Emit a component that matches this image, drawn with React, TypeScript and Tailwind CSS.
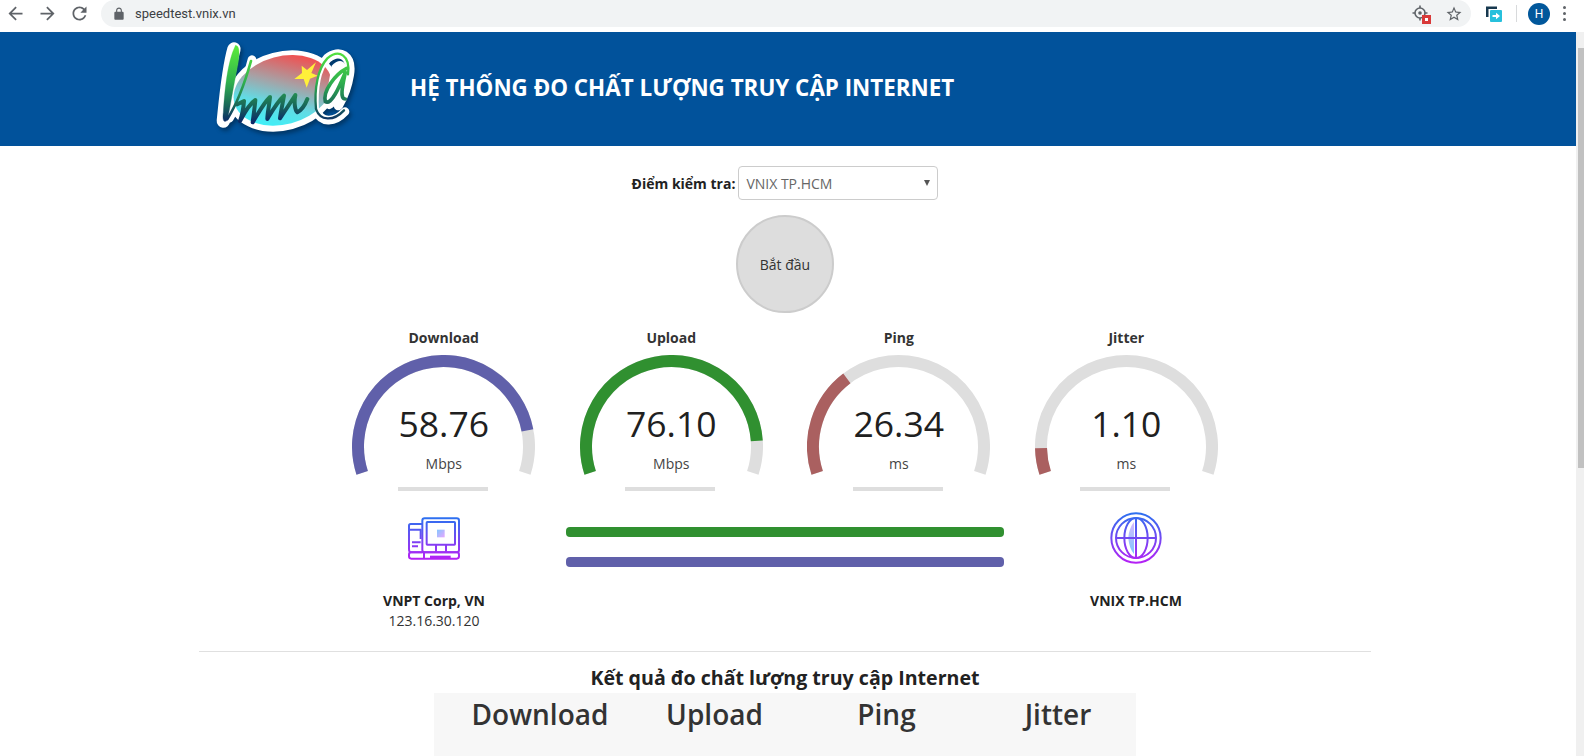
import React from "react";

function arc(cx: number, cy: number, r: number, a0: number, a1: number) {
  const x0 = cx + r * Math.cos(a0), y0 = cy + r * Math.sin(a0);
  const x1 = cx + r * Math.cos(a1), y1 = cy + r * Math.sin(a1);
  const large = a1 - a0 > Math.PI ? 1 : 0;
  return `M${x0} ${y0} A${r} ${r} 0 ${large} 1 ${x1} ${y1}`;
}

function Gauge({ title, value, unit, amount, color }: { title: string; value: string; unit: string; amount: number; color: string }) {
  const start = -1.1 * Math.PI;
  const end = 0.1 * Math.PI;
  const cur = start + (end - start) * amount;
  return (
    <div className="flex flex-col items-center">
      <div className="h-5 text-[14px] leading-5 font-bold text-[#333]">{title}</div>
      <div className="relative mt-[7px] h-[136px] w-[183px]">
        <svg width="183" height="136" viewBox="0 0 183 136" className="block">
          <path d={arc(91.5, 91.5, 85.5, start, end)} fill="none" stroke="#dedede" strokeWidth="12" />
          <path d={arc(91.5, 91.5, 85.5, start, cur)} fill="none" stroke={color} strokeWidth="12" />
        </svg>
        <div className="absolute left-0 right-0 top-[45px] text-center text-[35.5px] leading-[46px] font-normal text-[#202020]">{value}</div>
        <div className="absolute left-0 right-0 top-[99px] text-center text-[14px] leading-5 text-[#444]">{unit}</div>
        <div className="absolute left-[45.5px] top-[132px] h-1 w-[90px] bg-[#dedede]" />
      </div>
    </div>
  );
}

function Logo() {
  return (
    <svg width="180" height="105" viewBox="0 0 540 315" className="block drop-shadow-[2px_3px_2px_rgba(0,0,0,0.35)]">
      <defs>
        <linearGradient id="lg-oval" x1="0.18" y1="0.9" x2="0.82" y2="0.1">
          <stop offset="0" stopColor="#3ff0f8" />
          <stop offset="0.3" stopColor="#62dbe4" />
          <stop offset="0.6" stopColor="#a8a0a4" />
          <stop offset="1" stopColor="#f44c4c" />
        </linearGradient>
        <linearGradient id="lg-ink" gradientUnits="userSpaceOnUse" x1="0" y1="40" x2="0" y2="265">
          <stop offset="0" stopColor="#58e83c" />
          <stop offset="0.45" stopColor="#2fb04e" />
          <stop offset="0.75" stopColor="#1a6a58" />
          <stop offset="1" stopColor="#0a2468" />
        </linearGradient>
      </defs>
      <g stroke="#fff" strokeLinecap="round" strokeLinejoin="round" fill="#fff">
        <ellipse cx="278" cy="168" rx="160" ry="112" transform="rotate(-15 278 168)" strokeWidth="12" />
        <path d="M132 42 C115 100 108 180 100 258" strokeWidth="40" fill="none" />
        <path d="M118 250 C145 205 170 135 186 74" strokeWidth="26" fill="none" />
        <path d="M378 222 C372 160 384 100 412 70 C448 40 488 62 478 120 C470 170 455 195 445 212" strokeWidth="28" fill="none" />
        <path d="M380 228 C392 262 432 266 465 230" strokeWidth="26" fill="none" />
      </g>
      <ellipse cx="278" cy="166" rx="150" ry="102" transform="rotate(-15 278 166)" fill="url(#lg-oval)" />
      <path d="M425 92 C445 70 470 72 470 110 C462 165 452 190 440 205 C420 232 408 225 405 205 Z" fill="#fff" />
      <path d="M382 225 C378 160 388 105 414 74" fill="none" stroke="#fff" strokeWidth="10" strokeLinecap="round" />
      <polygon points="335,92 351,105 378,82 364,114 383,122 360,131 350,158 341,132 313,132 336,114" fill="#fff03a" />
      <g fill="none" stroke="url(#lg-ink)" strokeLinecap="round" strokeLinejoin="round">
        <path d="M136 32 C150 28 150 62 141 102 C131 150 122 208 112 256 C100 266 97 252 100 232 C104 168 112 80 136 32Z" fill="url(#lg-ink)" strokeWidth="1" />
        <path d="M112 252 C142 205 167 135 183 78" strokeWidth="8" />
        <path d="M142 208 L162 198 C160 225 155 245 150 258 C165 230 180 205 196 195 C194 220 190 245 188 262 C205 235 220 205 240 186 C238 210 232 235 232 252 C248 225 262 200 282 182 C278 205 272 232 270 250 C285 228 300 205 316 180 C312 200 314 225 322 232 C335 225 345 210 352 192" strokeWidth="12" />
        <path d="M378 222 C372 160 384 100 412 70 C448 40 482 62 474 118" strokeWidth="7" />
        <path d="M470 100 C435 118 398 168 406 200 C425 212 450 150 466 112 C458 150 448 192 466 192" strokeWidth="11" />
        <path d="M378 222 C390 258 430 260 462 226" strokeWidth="7" />
      </g>
    </svg>
  );
}

function ComputerIcon() {
  return (
    <svg width="52" height="43" viewBox="0 0 156 129" className="block">
      <defs>
        <linearGradient id="pc-g" gradientUnits="userSpaceOnUse" x1="0" y1="0" x2="0" y2="129">
          <stop offset="0" stopColor="#2a72f0" />
          <stop offset="1" stopColor="#b81ff5" />
        </linearGradient>
        <linearGradient id="pc-f" x1="0" y1="0" x2="1" y2="1">
          <stop offset="0" stopColor="#84c8ff" />
          <stop offset="1" stopColor="#e7a6ff" />
        </linearGradient>
      </defs>
      <g fill="none" stroke="url(#pc-g)" strokeWidth="6" strokeLinejoin="round">
        <rect x="43" y="4" width="110" height="102" rx="7" />
        <rect x="56" y="15" width="85" height="68" rx="2" />
        <path d="M43 21 H8 Q3 21 3 26 V96 Q3 105 8 106 H43" />
        <path d="M3 38 H38 V66 M12 76 H38 M12 88 H30" />
        <path d="M84 84 V106 M114 84 V106" />
        <rect x="3" y="106" width="150" height="19" rx="7" />
        <path d="M48 108 V124" />
      </g>
      <rect x="87" y="38" width="23" height="23" fill="url(#pc-f)" />
      <rect x="66" y="116" width="62" height="10" fill="url(#pc-g)" />
    </svg>
  );
}

function GlobeIcon() {
  return (
    <svg width="52" height="52" viewBox="0 0 156 156" className="block">
      <defs>
        <linearGradient id="gl-g" gradientUnits="userSpaceOnUse" x1="0" y1="0" x2="0" y2="156">
          <stop offset="0" stopColor="#2a72f0" />
          <stop offset="1" stopColor="#b81ff5" />
        </linearGradient>
        <linearGradient id="gl-f" x1="0" y1="0" x2="0" y2="1">
          <stop offset="0" stopColor="#d7b8ff" />
          <stop offset="1" stopColor="#7cc8ff" />
        </linearGradient>
      </defs>
      <path d="M72 30 C62 42 56 60 55 76 H72Z M72 80 H55 C57 98 62 114 72 126Z" fill="url(#gl-f)" />
      <g fill="none" stroke="url(#gl-g)" strokeWidth="6">
        <circle cx="78" cy="78" r="74" />
        <circle cx="78" cy="78" r="60" />
        <ellipse cx="78" cy="78" rx="35" ry="60" />
        <path d="M78 18 V138 M18 78 H138" />
      </g>
    </svg>
  );
}

function Mat({ d, size = 20, className = "" }: { d: string; size?: number; className?: string }) {
  return (
    <svg width={size} height={size} viewBox="0 0 24 24" className={"block fill-[#5f6368] " + className}>
      <path d={d} />
    </svg>
  );
}

function BrowserBar() {
  return (
    <div className="flex h-8 items-start bg-white">
      <div className="flex h-[27px] w-[101px] items-center">
        <div className="flex w-[31px] justify-center"><Mat size={21} d="M20 11H7.83l5.59-5.59L12 4l-8 8 8 8 1.41-1.41L7.83 13H20v-2z" /></div>
        <div className="flex w-[32px] justify-center"><Mat size={21} d="M12 4l-1.41 1.41L16.17 11H4v2h12.17l-5.58 5.59L12 20l8-8z" /></div>
        <div className="flex w-[32px] justify-center"><Mat size={21} d="M17.65 6.35C16.2 4.9 14.21 4 12 4c-4.42 0-7.99 3.58-7.99 8s3.57 8 7.99 8c3.73 0 6.84-2.55 7.73-6h-2.08c-.82 2.33-3.04 4-5.65 4-3.31 0-6-2.69-6-6s2.69-6 6-6c1.66 0 3.14.69 4.22 1.78L13 11h7V4l-2.35 2.35z" /></div>
      </div>
      <div className="flex h-[27px] w-[1370px] items-center rounded-r-[14px] rounded-l-[14px] bg-[#f1f3f4] pl-[11px]">
        <Mat size={14} d="M18 8h-1V6c0-2.76-2.24-5-5-5S7 3.24 7 6v2H6c-1.1 0-2 .9-2 2v10c0 1.1.9 2 2 2h12c1.1 0 2-.9 2-2V10c0-1.1-.9-2-2-2zM9 6c0-1.66 1.34-3 3-3s3 1.34 3 3v2H9V6z" />
        <span className="ml-[9px] font-['Roboto',sans-serif] text-[13px] text-[#3c4043]">speedtest.vnix.vn</span>
        <div className="ml-auto flex items-center gap-[15px] pr-[8px]">
          <div className="relative h-[18px] w-[18px]">
            <svg width="18" height="18" viewBox="0 0 18 18" className="block">
              <circle cx="8" cy="8" r="5" fill="none" stroke="#5f6368" strokeWidth="1.6" />
              <circle cx="8" cy="8" r="1.8" fill="#5f6368" />
              <path d="M8 0.5 V3 M8 13 V15.5 M0.5 8 H3 M13 8 H15.5" stroke="#5f6368" strokeWidth="1.6" />
            </svg>
            <div className="absolute bottom-[-1px] right-[-1px] flex h-[9px] w-[9px] items-center justify-center bg-[#d93a3a]">
              <div className="h-[3px] w-[3px] bg-white" />
            </div>
          </div>
          <Mat size={18} d="M22 9.24l-7.19-.62L12 2 9.19 8.63 2 9.24l5.46 4.73L5.82 21 12 17.27 18.18 21l-1.63-7.03L22 9.24zM12 15.4l-3.76 2.27 1-4.28-3.32-2.88 4.38-.38L12 6.1l1.71 4.04 4.38.38-3.32 2.88 1 4.28L12 15.4z" />
        </div>
      </div>
      <div className="flex h-[27px] flex-1 items-center">
        <div className="ml-[14px]">
          <svg width="18" height="18" viewBox="0 0 18 18" className="block">
            <path d="M1 1.5 H12 V4 H3.5 V12 H1Z" fill="#17384f" />
            <rect x="5" y="5" width="12" height="12" rx="1" fill="#27c0dc" />
            <path d="M7.5 10 H11 V7.8 L15 11 L11 14.2 V12 H7.5Z" fill="#fff" />
          </svg>
        </div>
        <div className="ml-[13px] h-[17px] w-px bg-[#d8dadc]" />
        <div className="ml-[11px] flex h-[22px] w-[22px] items-center justify-center rounded-full bg-[#01579b] font-['Roboto',sans-serif] text-[12px] text-white">H</div>
        <div className="ml-[13px] flex flex-col gap-[3px]">
          <div className="h-[3px] w-[3px] rounded-full bg-[#5f6368]" />
          <div className="h-[3px] w-[3px] rounded-full bg-[#5f6368]" />
          <div className="h-[3px] w-[3px] rounded-full bg-[#5f6368]" />
        </div>
      </div>
    </div>
  );
}

export default function App() {
  return (
    <div className="flex h-[756px] w-[1584px] flex-col overflow-hidden bg-white font-['Open_Sans',sans-serif] text-[#333]">
      <BrowserBar />
      <div className="flex flex-1 overflow-hidden">
        <main className="flex-1 overflow-hidden">
          <header className="flex h-[114px] items-start bg-[#01529b] pl-[190px] pt-[3px]">
            <Logo />
            <h1 className="ml-[40px] mt-[38px] text-[22.4px] leading-[30px] font-bold text-white">HỆ THỐNG ĐO CHẤT LƯỢNG TRUY CẬP INTERNET</h1>
          </header>

          <div className="ml-[199px] w-[1172px]">
            <div className="mt-5 flex items-center justify-center">
              <label className="text-[14px] font-bold text-[#222]">Điểm kiểm tra:</label>
              <div className="ml-[3px] flex h-[34px] w-[200px] items-center justify-between rounded border border-[#ccc] bg-white pl-[7px] pr-[7px] text-[14px] text-[#666]">
                <span>VNIX TP.HCM</span>
                <span className="h-0 w-0 border-x-[3.5px] border-t-[6px] border-x-transparent border-t-[#555]" />
              </div>
            </div>

            <div className="mt-[15px] flex justify-center">
              <button className="flex h-[98px] w-[98px] items-center justify-center rounded-full border-2 border-[#ccc] bg-[#ddd] text-[14px] text-[#333]">Bắt đầu</button>
            </div>

            <div className="mx-auto mt-[15px] grid w-[910px] grid-cols-4">
              <Gauge title="Download" value="58.76" unit="Mbps" amount={0.866} color="#6060AA" />
              <Gauge title="Upload" value="76.10" unit="Mbps" amount={0.899} color="#309030" />
              <Gauge title="Ping" value="26.34" unit="ms" amount={0.328} color="#AA6060" />
              <Gauge title="Jitter" value="1.10" unit="ms" amount={0.078} color="#AA6060" />
            </div>

            <div className="mx-auto mt-[21px] grid w-[902px] grid-cols-[200px_1fr_200px] gap-x-[32px]">
              <div className="flex flex-col items-center">
                <div className="flex h-[52px] items-center"><ComputerIcon /></div>
                <div className="mt-[27px] text-[14px] leading-5 font-bold text-[#222]">VNPT Corp, VN</div>
                <div className="text-[14px] leading-5 text-[#333]">123.16.30.120</div>
              </div>
              <div className="flex flex-col gap-5 pt-[15px]">
                <div className="h-[10px] rounded bg-[#309030]" />
                <div className="h-[10px] rounded bg-[#6060AA]" />
              </div>
              <div className="flex flex-col items-center">
                <GlobeIcon />
                <div className="mt-[27px] text-[14px] leading-5 font-bold text-[#222]">VNIX TP.HCM</div>
              </div>
            </div>

            <div className="mt-5 border-t border-[#e0e0e0]" />
            <h2 className="mt-[13px] text-center text-[19.6px] leading-[26px] font-bold text-[#222]">Kết quả đo chất lượng truy cập Internet</h2>
            <div className="mx-auto mt-[2px] grid h-[66px] w-[702px] grid-cols-[212px_137px_207px_136px] bg-[#f7f7f7] pt-[1px] text-center text-[28px] leading-10 font-semibold text-[#333]">
              <div>Download</div>
              <div>Upload</div>
              <div>Ping</div>
              <div>Jitter</div>
            </div>
          </div>
        </main>
        <div className="w-2 bg-[#f0f0f0]">
          <div className="ml-[2px] mt-[16px] h-[420px] w-[6px] bg-[#c1c1c1]" />
        </div>
      </div>
    </div>
  );
}
